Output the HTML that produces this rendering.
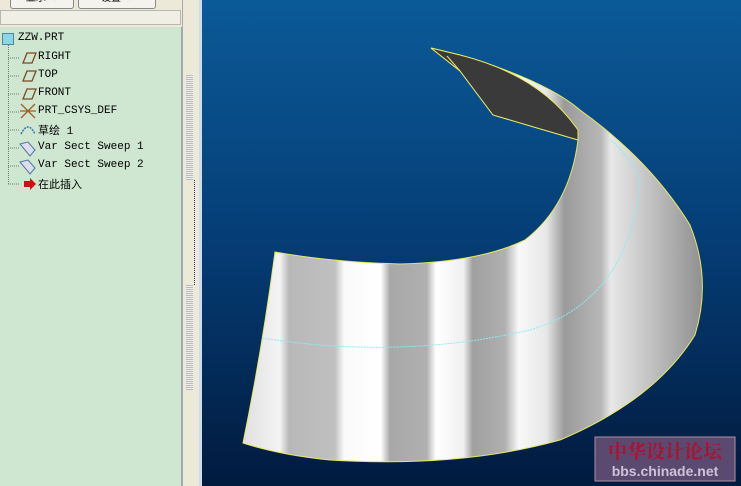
<!DOCTYPE html>
<html><head><meta charset="utf-8"><style>
body{margin:0;width:741px;height:486px;overflow:hidden;position:relative;font-family:"Liberation Mono","Noto Sans CJK SC",monospace;background:#ece9d8}
#left{position:absolute;left:0;top:27px;width:181px;height:459px;background:#cfe7d0;border-right:1px solid #9aa;}
.it{position:absolute;left:18px;font-size:11px;color:#000;white-space:nowrap}
</style></head><body>
<div style="position:absolute;left:0;top:0;width:200px;height:10px;background:#ece9d8"></div>
<div style="position:absolute;left:10px;top:-6px;width:62px;height:13px;border:1px solid #888;border-radius:3px;background:#f4f3ee;font-size:10px;text-align:center;line-height:10px">显示 ▾</div>
<div style="position:absolute;left:78px;top:-6px;width:76px;height:13px;border:1px solid #888;border-radius:3px;background:#f4f3ee;font-size:10px;text-align:center;line-height:10px">设置 ▾</div>
<div style="position:absolute;left:0;top:10px;width:181px;height:15px;background:#f0efe6;border:1px solid #b8b8b0;box-sizing:border-box"></div>
<div id="left"></div>
<div style="position:absolute;left:8px;top:42px;width:1px;height:142px;border-left:1px dotted #777"></div>
<div style="position:absolute;left:2px;top:33px;width:10px;height:10px;background:#8ed6e6;border:1px solid #4a8aa0"></div>
<div class="it" style="top:32px">ZZW.PRT</div>
<svg style="position:absolute;left:8px;top:50px" width="30" height="140">
<g stroke="#777" stroke-dasharray="1,1"><line x1="0" y1="8" x2="12" y2="8"/><line x1="0" y1="26" x2="12" y2="26"/><line x1="0" y1="44" x2="12" y2="44"/><line x1="0" y1="62" x2="12" y2="62"/><line x1="0" y1="80" x2="12" y2="80"/><line x1="0" y1="98" x2="12" y2="98"/><line x1="0" y1="116" x2="12" y2="116"/><line x1="0" y1="134" x2="12" y2="134"/></g>
<g fill="none" stroke="#7a4a20" stroke-width="1.3"><path d="M15 13 L19 3 L28 3 L24 13Z"/><path d="M15 31 L19 21 L28 21 L24 31Z"/><path d="M15 49 L19 39 L28 39 L24 49Z"/></g>
<path d="M13 54 L27 68 M27 54 L13 68 M12 61 L28 61" stroke="#a06020" stroke-width="1.3"/>
<path d="M13 84 Q20 70 27 84" fill="none" stroke="#2a7ab0" stroke-width="1.5" stroke-dasharray="2,1"/>
<path d="M12 94 L20 92 L27 100 L22 106Z M12 112 L20 110 L27 118 L22 124Z" fill="#dde" stroke="#4a7aa0"/>
<path d="M16 131 L22 131 L22 128 L28 134 L22 140 L22 137 L16 137Z" fill="#d01010"/>
</svg>
<div class="it" style="top:51px;left:38px">RIGHT</div>
<div class="it" style="top:69px;left:38px">TOP</div>
<div class="it" style="top:87px;left:38px">FRONT</div>
<div class="it" style="top:105px;left:38px">PRT_CSYS_DEF</div>
<div class="it" style="top:122px;left:38px">草绘 1</div>
<div class="it" style="top:141px;left:38px">Var Sect Sweep 1</div>
<div class="it" style="top:159px;left:38px">Var Sect Sweep 2</div>
<div class="it" style="top:176px;left:38px">在此插入</div>
<div style="position:absolute;left:182px;top:0;width:20px;height:486px;background:#ece9d8;border-left:1px solid #aaa"></div>
<div style="position:absolute;left:186px;top:75px;width:7px;height:105px;background:repeating-linear-gradient(#bbb 0 1px,#eee 1px 2px)"></div>
<div style="position:absolute;left:186px;top:285px;width:7px;height:105px;background:repeating-linear-gradient(#bbb 0 1px,#eee 1px 2px)"></div>
<div style="position:absolute;left:194px;top:180px;width:6px;height:105px;border-left:1px dotted #336"></div>
<div style="position:absolute;left:199px;top:0;width:3px;height:486px;background:#cde"></div>
<svg style="position:absolute;left:202px;top:0" width="539" height="486" viewBox="202 0 539 486">
<defs>
<linearGradient id="bg" x1="0" y1="0" x2="0" y2="1"><stop offset="0" stop-color="#0b5a98"/><stop offset="0.5" stop-color="#053d75"/><stop offset="1" stop-color="#011a3e"/></linearGradient>
<linearGradient id="st" x1="0" y1="0" x2="1" y2="0">
<stop offset="0" stop-color="#e0e0e0"/><stop offset="0.08" stop-color="#f4f4f4"/><stop offset="0.1" stop-color="#b8b8b8"/><stop offset="0.2" stop-color="#c0c0c0"/><stop offset="0.22" stop-color="#fafafa"/><stop offset="0.3" stop-color="#fff"/><stop offset="0.32" stop-color="#a8a8a8"/><stop offset="0.4" stop-color="#b0b0b0"/><stop offset="0.42" stop-color="#fff"/><stop offset="0.48" stop-color="#f0f0f0"/><stop offset="0.5" stop-color="#a0a0a0"/><stop offset="0.57" stop-color="#b0b0b0"/><stop offset="0.6" stop-color="#f8f8f8"/><stop offset="0.66" stop-color="#e8e8e8"/><stop offset="0.7" stop-color="#9a9a9a"/><stop offset="0.78" stop-color="#b8b8b8"/><stop offset="0.8" stop-color="#e8e8e8"/><stop offset="1" stop-color="#909090"/></linearGradient>
</defs>
<rect x="202" y="0" width="539" height="486" fill="url(#bg)"/>
<path d="M431 48 L460 55 Q545 80 580 110 Q650 160 690 225 Q712 280 695 335 Q655 400 560 440 Q460 468 330 460 Q280 455 243 443 Q262 350 275 252 Q330 262 400 264 Q480 262 525 240 Q570 205 578 140 L493 115 L460 71Z" fill="url(#st)" stroke="#e8e860" stroke-width="1"/>
<path d="M431 48 L460 55 Q540 75 578 130 L578 140 L493 115 L460 71Z" fill="#3a3a3a" stroke="#e8e860"/>
<path d="M447 56 L460 71" stroke="#e8e860"/>
<path d="M262 338 Q400 360 530 330 Q630 300 640 180 Q625 150 610 140" fill="none" stroke="#8ee" stroke-width="1" stroke-dasharray="2,1"/>
<rect x="595" y="437" width="140" height="44" fill="#5a4a70" stroke="#b090a0"/>
<text x="665" y="458" text-anchor="middle" font-family="Noto Serif CJK SC,serif" font-size="19" fill="#b01030" font-weight="bold">中华设计论坛</text>
<text x="665" y="476" text-anchor="middle" font-family="Liberation Sans,sans-serif" font-size="14" font-weight="bold" fill="#d0c0d8">bbs.chinade.net</text>
</svg>
</body></html>
